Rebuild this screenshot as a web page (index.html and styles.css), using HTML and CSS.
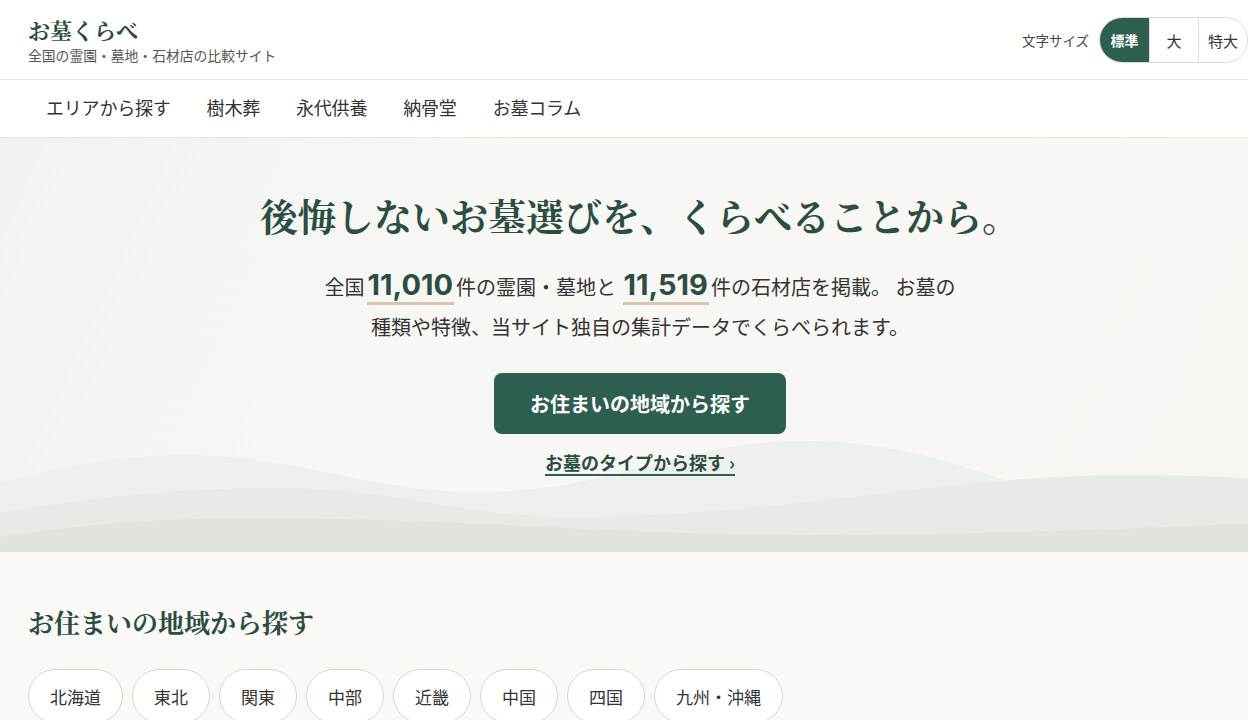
FILE: index.html
```html
<!DOCTYPE html>
<html lang="ja">
<head>
<meta charset="utf-8">
<title>お墓くらべ｜全国の霊園・墓地・石材店の比較サイト</title>
<link rel="stylesheet" href="styles.css">
</head>
<body>
<header class="site-header">
  <div class="brand">
    <div class="brand-name">お墓くらべ</div>
    <div class="brand-tagline">全国の霊園・墓地・石材店の比較サイト</div>
  </div>
  <div class="fontsize">
    <span class="fontsize-label">文字サイズ</span>
    <div class="fontsize-group">
      <button class="fs-btn is-active">標準</button>
      <button class="fs-btn">大</button>
      <button class="fs-btn">特大</button>
    </div>
  </div>
</header>

<nav class="global-nav">
  <a href="#">エリアから探す</a>
  <a href="#">樹木葬</a>
  <a href="#">永代供養</a>
  <a href="#">納骨堂</a>
  <a href="#">お墓コラム</a>
</nav>

<section class="hero">
  <svg class="hero-hills" viewBox="0 0 1248 140" preserveAspectRatio="none" aria-hidden="true">
    <path fill="#eef0ec" d="M0,71 C60,55 110,43 179,43 C290,43 360,80 466,80 C600,80 660,29 784,29 C930,29 1000,93 1099,93 C1170,93 1220,70 1248,58 L1248,140 L0,140Z"/>
    <path fill="#e7eae5" d="M0,101 C90,85 180,76 263,76 C390,76 450,105 557,105 C760,105 920,63 1099,63 C1170,63 1220,66 1248,70 L1248,140 L0,140Z"/>
    <path fill="#e1e3dd" d="M0,125 C80,112 160,106 239,106 C450,106 600,123 796,123 C1000,123 1150,113 1248,111 L1248,140 L0,140Z"/>
  </svg>
  <div class="hero-inner">
    <h1 class="hero-title">後悔しないお墓選びを、くらべることから。</h1>
    <p class="hero-lead">全国<span class="num">11,010</span>件の霊園・墓地と <span class="num">11,519</span>件の石材店を掲載。 お墓の<br>種類や特徴、当サイト独自の集計データでくらべられます。</p>
    <a class="btn-primary" href="#">お住まいの地域から探す</a>
    <a class="link-sub" href="#">お墓のタイプから探す ›</a>
  </div>
</section>

<section class="area">
  <h2 class="section-title">お住まいの地域から探す</h2>
  <div class="area-list">
    <a class="area-pill" href="#">北海道</a>
    <a class="area-pill" href="#">東北</a>
    <a class="area-pill" href="#">関東</a>
    <a class="area-pill" href="#">中部</a>
    <a class="area-pill" href="#">近畿</a>
    <a class="area-pill" href="#">中国</a>
    <a class="area-pill" href="#">四国</a>
    <a class="area-pill" href="#">九州・沖縄</a>
  </div>
</section>
</body>
</html>
```

FILE: styles.css
```css
* { box-sizing: border-box; }

html, body {
  margin: 0;
  padding: 0;
}

body {
  min-width: 1280px;
  font-family: "Noto Sans CJK JP", "Noto Sans", sans-serif;
  color: #333;
  background: #faf9f6;
  overflow: hidden;
}

a { text-decoration: none; color: inherit; }

/* ---------- header ---------- */
.site-header {
  height: 80px;
  background: #fff;
  border-bottom: 1px solid #e6e4df;
  display: flex;
  align-items: center;
  justify-content: space-between;
  padding: 0 32px 0 28px;
}

.brand-name {
  font-family: "Noto Serif CJK JP", "Noto Sans CJK JP", serif;
  font-size: 22px;
  font-weight: 700;
  color: #2b4d42;
  line-height: 28px;
}

.brand-tagline {
  font-size: 13.8px;
  color: #555;
  line-height: 18px;
  margin-top: 2px;
}

.fontsize {
  display: flex;
  align-items: center;
  gap: 10px;
  margin-top: 1px;
}

.fontsize-label {
  font-size: 13.5px;
  color: #444;
}

.fontsize-group {
  display: flex;
  height: 46px;
  border: 1px solid #dcd8d0;
  border-radius: 23px;
  overflow: hidden;
  background: #fff;
}

.fs-btn {
  width: 49px;
  border: 0;
  border-left: 1px solid #e3e0da;
  background: #fff;
  font-family: inherit;
  font-size: 15px;
  color: #333;
  padding: 0;
}

.fs-btn:first-child { border-left: 0; }

.fs-btn.is-active {
  background: #2e5e50;
  color: #fff;
  font-weight: 700;
  font-size: 14px;
}

/* ---------- global nav ---------- */
.global-nav {
  height: 58px;
  background: #fff;
  border-bottom: 1px solid #e6e4df;
  display: flex;
  align-items: center;
  padding: 0 0 4px 28px;
}

.global-nav a {
  padding: 0 18px;
  font-size: 18px;
  color: #333;
  letter-spacing: -0.2px;
}

/* ---------- hero ---------- */
.hero {
  position: relative;
  height: 414px;
  background: linear-gradient(115deg, #f1f3f1 0%, #f7f7f4 35%, #f8f7f3 70%, #f6f5f0 100%);
  overflow: hidden;
}

.hero-hills {
  position: absolute;
  left: 0;
  bottom: 0;
  width: 100%;
  height: 140px;
  display: block;
}

.hero-inner {
  position: relative;
  display: flex;
  flex-direction: column;
  align-items: center;
  padding-top: 55px;
}

.hero-title {
  margin: 0;
  font-family: "Noto Serif CJK JP", "Noto Sans CJK JP", serif;
  font-size: 38px;
  font-weight: 700;
  line-height: 44px;
  color: #2b4d42;
}

.hero-lead {
  margin: 28px 0 0;
  font-size: 20px;
  line-height: 40px;
  color: #333;
  text-align: center;
}

.num {
  font-family: "Inter", "Open Sans", sans-serif;
  font-weight: 700;
  font-size: 29px;
  color: #2b4d42;
  margin: 0 2px;
  padding: 0 1px 8px;
  background: linear-gradient(#d6c7ad, #d6c7ad) no-repeat left bottom 5px / 100% 3px;
}

.btn-primary {
  margin-top: 26px;
  width: 292px;
  height: 61px;
  border-radius: 8px;
  background: #2e5e50;
  color: #fff;
  font-size: 20px;
  font-weight: 700;
  display: flex;
  align-items: center;
  justify-content: center;
}

.link-sub {
  margin-top: 16px;
  font-size: 18px;
  font-weight: 700;
  color: #2b4d42;
  line-height: 24px;
  border-bottom: 2px solid #2e5e50;
}

/* ---------- area section ---------- */
.area {
  padding: 52px 28px 0;
}

.section-title {
  margin: 0;
  font-family: "Noto Serif CJK JP", "Noto Sans CJK JP", serif;
  font-size: 26px;
  font-weight: 700;
  line-height: 36px;
  color: #2b4d42;
}

.area-list {
  margin-top: 29px;
  display: flex;
  gap: 9px;
}

.area-pill {
  height: 54px;
  padding: 0 21px;
  border: 1px solid #d9d5cc;
  border-radius: 27px;
  background: #fff;
  display: flex;
  align-items: center;
  font-size: 17px;
  color: #333;
}
```
